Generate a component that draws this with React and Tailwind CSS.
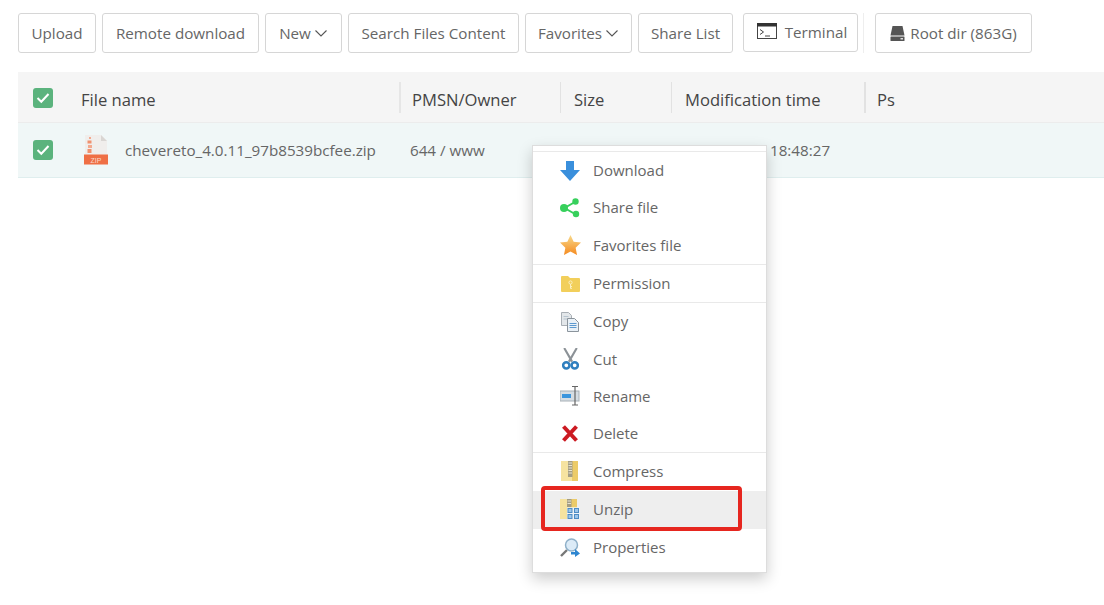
const Chevron = () => (
  <svg width="14" height="14" viewBox="0 0 14 14" className="ml-[3px]" fill="none">
    <path d="M1.5 4.5 7 10l5.500-5.500" stroke="#555" strokeWidth="1.100" />
  </svg>
);

const Check = () => (
  <div className="w-5 h-5 rounded-[3px] bg-[#5bb37d] flex items-center justify-center">
    <svg width="14" height="12" viewBox="0 0 14 12" fill="none">
      <path d="M1.5 6 5.300 9.800 12.500 2" stroke="#fff" strokeWidth="2" />
    </svg>
  </div>
);

const TerminalIcon = () => (
  <svg width="20" height="16" viewBox="0 0 20 16" className="mr-[8px] mb-[3px]">
    <rect x="0.500" y="0.500" width="19" height="15" fill="#fff" stroke="#444" />
    <rect x="0" y="0" width="20" height="3.500" fill="#333" />
    <path d="M3 6.500 6.500 9 3 11.500" fill="none" stroke="#444" strokeWidth="1" />
    <path d="M8 13h5" stroke="#444" strokeWidth="1" />
  </svg>
);

const DiskIcon = () => (
  <svg width="15" height="15" viewBox="0 0 15 15" className="mr-[5px]">
    <path d="M2.500 0h10L14.500 9.500h-14z" fill="#555" />
    <rect x="0.500" y="10.500" width="14" height="4.500" rx="0.500" fill="#555" />
    <rect x="10.500" y="12" width="2.500" height="1.500" fill="#ddd" />
  </svg>
);

const ZipFile = () => (
  <svg width="24" height="30" viewBox="0 0 24 30">
    <path d="M1 0h16l6 6v20H1z" fill="#f0eeec" />
    <path d="M17 0l6 6h-6z" fill="#d9d6d3" />
    <rect x="5" y="2" width="2" height="2" fill="#f3a98e" />
    <rect x="3.500" y="5.500" width="4" height="3" fill="#f0916f" />
    <rect x="4" y="10" width="4" height="3" fill="#f3a98e" />
    <rect x="3.500" y="14" width="4" height="4" fill="#f0916f" />
    <rect x="0" y="19.500" width="24" height="10" fill="#ef6f45" />
    <text x="12" y="27.500" textAnchor="middle" fontSize="7" fill="#f9d8cc" fontFamily="Liberation Sans, sans-serif">ZIP</text>
  </svg>
);

const DownloadIcon = () => (
  <svg width="20" height="20" viewBox="0 0 20 20">
    <path d="M6 0h8v9h6L10 20 0 9h6z" fill="#3a8fdc" />
  </svg>
);

const ShareIcon = () => (
  <svg width="20" height="20" viewBox="0 0 20 20">
    <path d="M15 4 4.500 10 15 16" fill="none" stroke="#37d05c" strokeWidth="2" />
    <circle cx="15.500" cy="3.500" r="3.200" fill="#37d05c" />
    <circle cx="4" cy="10" r="4" fill="#37d05c" />
    <circle cx="16" cy="16" r="3.200" fill="#37d05c" />
  </svg>
);

const StarIcon = () => (
  <svg width="21" height="20" viewBox="0 0 20 19">
    <defs>
      <linearGradient id="star" x1="0" y1="0" x2="0" y2="1">
        <stop offset="0" stopColor="#f8d98a" />
        <stop offset="1" stopColor="#f58a1f" />
      </linearGradient>
    </defs>
    <path d="M10 0l3 6.300 7 .9-5.100 4.800L16.200 19 10 15.600 3.800 19l1.300-7L0 7.200l7-.9z" fill="url(#star)" />
  </svg>
);

const PermissionIcon = () => (
  <svg width="19" height="16" viewBox="0 0 19 16">
    <path d="M1 0h6l2 2h9a1 1 0 0 1 1 1v12a1 1 0 0 1-1 1H1a1 1 0 0 1-1-1V1a1 1 0 0 1 1-1z" fill="#f2cf5b" />
    <circle cx="9.500" cy="6.500" r="1.600" fill="none" stroke="#fbf0c4" strokeWidth="1" />
    <path d="M9.500 8v4.500M9.500 10.500h1.500M9.500 12.300h1.500" stroke="#fbf0c4" strokeWidth="1" fill="none" />
  </svg>
);

const CopyIcon = () => (
  <svg width="18" height="20" viewBox="0 0 18 20">
    <path d="M.5.500h7l3 3v10H.5z" fill="#e3e7ea" stroke="#a9afb5" />
    <path d="M2.500 4.500h5M2.500 7h5" stroke="#b7c4cf" />
    <path d="M6.500 6.500h7l4 4v9h-11z" fill="#eaf1f7" stroke="#8b949c" />
    <path d="M8.500 11.500h7M8.500 13.500h7M8.500 15.500h7" stroke="#5d9ad0" />
  </svg>
);

const CutIcon = () => (
  <svg width="17" height="22" viewBox="0 0 16 21">
    <path d="M2 0 9.500 13M14 0 6.500 13" stroke="#8c9297" strokeWidth="2" fill="none" />
    <circle cx="4" cy="16.500" r="3" fill="none" stroke="#2f7fbf" strokeWidth="2.400" />
    <circle cx="12" cy="16.500" r="3" fill="none" stroke="#2f7fbf" strokeWidth="2.400" />
  </svg>
);

const RenameIcon = () => (
  <svg width="20" height="20" viewBox="0 0 20 20">
    <rect x="0" y="5" width="19" height="10" fill="#d5dde3" stroke="#a8b0b6" />
    <rect x="2" y="8" width="9" height="4" fill="#3a95dd" />
    <path d="M12 .500h6M15 .500v18.500M12 19h6" stroke="#666" strokeWidth="1.200" fill="none" />
  </svg>
);

const DeleteIcon = () => (
  <svg width="18" height="17" viewBox="0 0 18 17">
    <path d="M2.500 1.500 15.500 15.500M15.500 1.500 2.500 15.500" stroke="#cc1a22" strokeWidth="4" />
  </svg>
);

const CompressIcon = () => (
  <svg width="18" height="20" viewBox="0 0 18 20">
    <rect x="0" y="0" width="17" height="20" fill="#f6e3a0" />
    <path d="M11 0h6v20h-6z" fill="#eccb68" />
    <rect x="7" y="0" width="4.500" height="16" fill="#a49d83" />
    <path d="M7.500 2h3.500M7.500 4.500h3.500M7.500 7h3.500M7.500 9.500h3.500M7.500 12h3.500" stroke="#e8e4d2" />
  </svg>
);

const UnzipIcon = () => (
  <svg width="20" height="20" viewBox="0 0 20 20">
    <rect x="0" y="0" width="17" height="20" fill="#f6e3a0" />
    <path d="M11 0h6v8h-6z" fill="#eccb68" />
    <rect x="7" y="0" width="4.500" height="8" fill="#a49d83" />
    <path d="M7.500 2h3.500M7.500 4.500h3.500" stroke="#e8e4d2" />
    <rect x="7" y="8.500" width="13" height="11.500" fill="#eef3f7" />
    <g fill="#9cc6ea" stroke="#4d8cc4">
      <rect x="8" y="9.500" width="4" height="4" />
      <rect x="14.500" y="9.500" width="4" height="4" />
      <rect x="8" y="15.500" width="4" height="4" />
      <rect x="14.500" y="15.500" width="4" height="4" />
    </g>
  </svg>
);

const PropertiesIcon = () => (
  <svg width="20" height="19" viewBox="0 0 20 19">
    <path d="M1 18 7 12" stroke="#777" strokeWidth="2.400" />
    <circle cx="11.500" cy="7" r="6" fill="#dcebf7" stroke="#8fb0c9" strokeWidth="1.500" />
    <path d="M11 14h4v-3l5 4.500-5 3.500v-2.500h-4z" fill="#2e86d0" />
  </svg>
);

const menuGroups = [
  {
    items: [
      { label: "Download", icon: <DownloadIcon />, rowClass: "h-[37px]" },
      { label: "Share file", icon: <ShareIcon />, rowClass: "h-[37px]" },
      { label: "Favorites file", icon: <StarIcon />, rowClass: "h-[38px]" },
    ],
  },
  {
    items: [{ label: "Permission", icon: <PermissionIcon />, rowClass: "h-[37px]" }],
  },
  {
    items: [
      { label: "Copy", icon: <CopyIcon />, rowClass: "h-[37.25px]" },
      { label: "Cut", icon: <CutIcon />, rowClass: "h-[37.25px]" },
      { label: "Rename", icon: <RenameIcon />, rowClass: "h-[37.25px]" },
      { label: "Delete", icon: <DeleteIcon />, rowClass: "h-[37.25px]" },
    ],
  },
  {
    items: [
      { label: "Compress", icon: <CompressIcon />, rowClass: "h-[38px] pb-[2px]" },
      { label: "Unzip", icon: <UnzipIcon />, rowClass: "h-[38px] pb-[2px] bg-[#eeeeee]" },
      { label: "Properties", icon: <PropertiesIcon />, rowClass: "h-[38px] pb-[2px]" },
    ],
  },
];

const buttonClass =
  "h-10 border border-[#d6d6d6] rounded-[3px] bg-white text-[#666] flex items-center justify-center shrink-0";

const headCols = [
  { label: "File name", className: "w-[331px] pl-[13px]" },
  { label: "PMSN/Owner", className: "w-[161px] pl-[11px] border-l-2 border-[#e6e6e6]" },
  { label: "Size", className: "w-[111px] pl-[13px] border-l border-[#e2e2e2]" },
  { label: "Modification time", className: "w-[193px] pl-[13px] border-l border-[#e2e2e2]" },
  { label: "Ps", className: "pl-[11px] border-l-2 border-[#e2e2e2]" },
];

export default function App() {
  return (
    <div className="relative h-[605px] overflow-hidden bg-white font-['Open_Sans',sans-serif] text-[15px]">
      <div className="flex items-start gap-[6px] pl-[18px] pt-[13px] text-[15.2px]">
        <button className={`${buttonClass} w-[78px]`}>Upload</button>
        <button className={`${buttonClass} w-[157px]`}>Remote download</button>
        <button className={`${buttonClass} w-[77px]`}>
          New
          <Chevron />
        </button>
        <button className={`${buttonClass} w-[171px]`}>Search Files Content</button>
        <button className={`${buttonClass} w-[107px]`}>
          Favorites
          <Chevron />
        </button>
        <button className={`${buttonClass} w-[95px]`}>Share List</button>
        <button className={`${buttonClass} w-[115px] ml-[4px] h-[39px] pl-[3px]`}>
          <TerminalIcon />
          Terminal
        </button>
        <div className="w-px h-10 bg-[#eeeeee] ml-[-1px]"></div>
        <button className={`${buttonClass} w-[157px] ml-[5px]`}>
          <DiskIcon />
          Root dir (863G)
        </button>
      </div>

      <div className="ml-[18px] mt-[19px]">
        <div className="flex items-center h-[51px] bg-[#f5f5f5] border-b border-[#ececec] text-[#444] text-[16.6px]">
          <div className="w-[50px] pl-[15px] pt-[2px]">
            <Check />
          </div>
          {headCols.map((col) => (
            <div key={col.label} className={`h-[31px] flex items-center pt-[6px] ${col.className}`}>
              {col.label}
            </div>
          ))}
        </div>

        <div className="flex items-center h-[55px] bg-[#f0f7f7] border-b border-[#dfeeee] text-[#666] text-[15.2px]">
          <div className="w-[50px] pl-[15px]">
            <Check />
          </div>
          <div className="w-[331px] pl-4 flex items-center gap-[17px]">
            <ZipFile />
            chevereto_4.0.11_97b8539bcfee.zip
          </div>
          <div className="w-[161px] pl-[11px]">644 / www</div>
          <div className="w-[111px]"></div>
          <div className="pl-[99px]">18:48:27</div>
        </div>
      </div>

      {/* right click menu */}
      <div className="absolute left-[532px] top-[145px] w-[235px] bg-white border border-[#dddddd] pt-[5px] pb-[5px] shadow-[0_6px_14px_rgba(0,0,0,0.2)] text-[#666]">
        {menuGroups.map((group) => (
          <div key={group.items[0].label} className="border-t border-[#e9e9e9]">
            {group.items.map((item) => (
              <div key={item.label} className={`flex items-center pl-[25px] ${item.rowClass}`}>
                <span className="w-6 flex justify-center items-center">{item.icon}</span>
                <span className="ml-[11px]">{item.label}</span>
              </div>
            ))}
          </div>
        ))}
      </div>

      {/* red highlight around Unzip */}
      <div className="absolute left-[541px] top-[486px] w-[201px] h-[45px] border-[4px] border-[#e6261f] rounded-[4px]"></div>
    </div>
  );
}
